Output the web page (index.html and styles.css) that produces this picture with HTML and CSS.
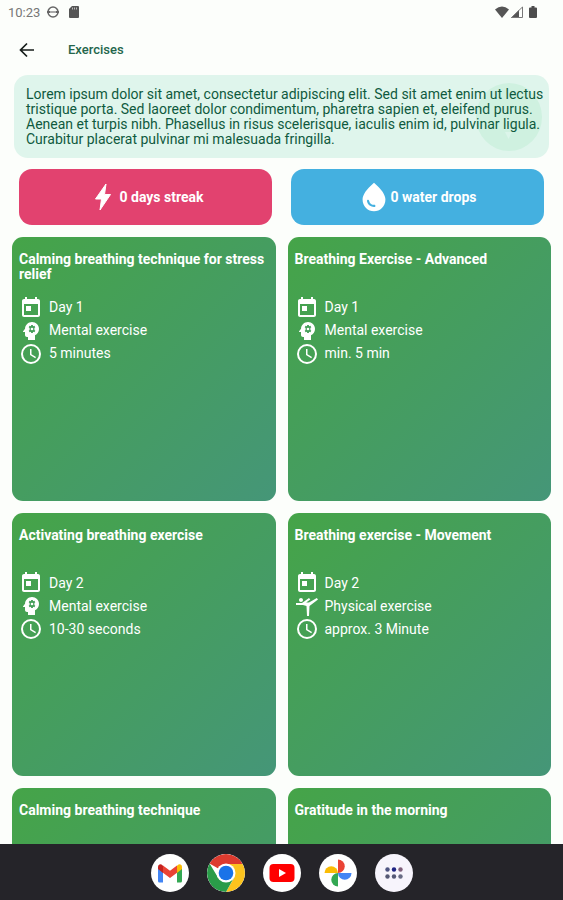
FILE: index.html
```
<!DOCTYPE html>
<html lang="en">
<head>
<meta charset="utf-8">
<meta name="viewport" content="width=device-width, initial-scale=1">
<title>Exercises</title>
<link rel="stylesheet" href="styles.css">
</head>
<body>
<svg class="sprite" aria-hidden="true">
  <symbol id="day" viewBox="0 0 24 24"><path d="M19 3h-1V1h-2v2H8V1H6v2H5c-1.100 0-2 .9-2 2v14c0 1.100.9 2 2 2h14c1.100 0 2-.9 2-2V5c0-1.100-.9-2-2-2zm0 16H5V8h14v11zM7 10h5v5H7z"/></symbol>
  <symbol id="mental" viewBox="0 0 24 24"><path d="M13 3C9.250 3 6.200 5.940 6.020 9.640L4.100 12.200c-.25.33-.01.8.4.8H6v3c0 1.100.9 2 2 2h1v3h7v-4.680c2.360-1.120 4-3.530 4-6.320 0-3.870-3.130-7-7-7z"/><path class="hole" d="M12.200 6h1.600l.3 1.200 1.300-.4.9 1.400-.9.900v1.800l.9.900-.9 1.400-1.300-.4-.3 1.200h-1.600l-.3-1.200-1.300.4-.9-1.400.9-.9V9.100l-.9-.9.9-1.400 1.300.4z"/><circle cx="13" cy="10" r="1.300"/></symbol>
  <symbol id="physical" viewBox="0 0 24 24"><path d="M4 6c0-1.100.9-2 2-2s2 .9 2 2-.9 2-2 2-2-.9-2-2zM1 9h6l7-5 1.310 1.520L11.140 8.500H14L21.800 4 23 5.400 14.500 12 14 22h-2l-.5-10L8 11H1V9z"/></symbol>
  <symbol id="time" viewBox="0 0 24 24"><path d="M12 2a10 10 0 1 0 0 20 10 10 0 0 0 0-20zm0 18a8 8 0 1 1 0-16 8 8 0 0 1 0 16zm.5-13H11v6l5.250 3.150.75-1.230-4.500-2.670z"/></symbol>
</svg>

<header class="status">
  <span class="clock">10:23</span>
  <svg width="14" height="14" viewBox="0 0 14 14"><circle cx="7" cy="7" r="5" fill="none" stroke="#666" stroke-width="1.500"/><path d="M1 6h12v2H1z" fill="#666"/><path d="M4 7h6" stroke="#eee"/></svg>
  <svg width="14" height="14" viewBox="0 0 14 14"><path d="M5 1h6a1 1 0 0 1 1 1v10a1 1 0 0 1-1 1H3a1 1 0 0 1-1-1V4z" fill="#555"/><path d="M5.500 2.500v2M7.500 2.500v2M9.500 2.500v2" stroke="#bbb"/></svg>
  <span class="spacer"></span>
  <svg width="14" height="14" viewBox="0 0 14 14"><path d="M0 4.500Q7-1.500 14 4.500L7 13z" fill="#555"/></svg>
  <svg width="14" height="14" viewBox="0 0 14 14"><path d="M1 13 9 5v8z" fill="#555"/><path d="M1.500 12.500h11V2z" fill="none" stroke="#777"/></svg>
  <svg class="battery" width="8" height="14" viewBox="0 0 8 14"><path d="M2.500 1h3v1.500H7a1 1 0 0 1 1 1V12a1 1 0 0 1-1 1H1a1 1 0 0 1-1-1V3.500a1 1 0 0 1 1-1h1.500z" fill="#4d4d4d"/></svg>
</header>

<nav class="appbar">
  <button class="back" aria-label="Back"><svg width="16" height="16" viewBox="0 0 16 16"><path d="M15 8H2M8 1.500 1.500 8 8 14.500" fill="none" stroke="#161d1a" stroke-width="1.700"/></svg></button>
  <h1>Exercises</h1>
</nav>

<main>
  <section class="intro">
    <svg class="blob" viewBox="0 0 66 70" aria-hidden="true"><ellipse cx="33" cy="35" rx="33" ry="34" fill="#cff1e0"/><path d="M29 50h7l-3.500 7z" fill="#dcf5ea"/></svg>
    <p>Lorem ipsum dolor sit amet, consectetur adipiscing elit. Sed sit amet enim ut lectus tristique porta. Sed laoreet dolor condimentum, pharetra sapien et, eleifend purus. Aenean et turpis nibh. Phasellus in risus scelerisque, iaculis enim id, pulvinar ligula. Curabitur placerat pulvinar mi malesuada fringilla.</p>
  </section>

  <section class="stats">
    <button class="stat streak"><svg viewBox="0 0 30 30"><path d="M18 2 7.500 17h6L12 28 22.500 12.500h-6z" fill="#fff" stroke="#fff" stroke-linejoin="round"/></svg>0 days streak</button>
    <button class="stat drops"><svg viewBox="1.500 1.500 21 21"><path fill="#fff" d="M12 2c-5.330 4.550-8 8.480-8 11.800 0 4.980 3.800 8.200 8 8.200s8-3.220 8-8.200c0-3.320-2.670-7.250-8-11.800zM7.830 14c.37 0 .67.26.74.62.41 2.220 2.280 2.980 3.640 2.870.43-.02.79.32.79.75 0 .4-.32.73-.72.75-2.130.13-4.620-1.090-5.190-4.120-.08-.45.28-.87.74-.87z"/></svg>0 water drops</button>
  </section>

  <section class="cards">
    <article class="card"><h2>Calming breathing technique for stress relief</h2>
      <ul><li><svg><use href="#day"/></svg>Day 1</li><li><svg><use href="#mental"/></svg>Mental exercise</li><li><svg><use href="#time"/></svg>5 minutes</li></ul></article>
    <article class="card"><h2>Breathing Exercise - Advanced</h2>
      <ul><li><svg><use href="#day"/></svg>Day 1</li><li><svg><use href="#mental"/></svg>Mental exercise</li><li><svg><use href="#time"/></svg>min. 5 min</li></ul></article>
    <article class="card"><h2>Activating breathing exercise</h2>
      <ul><li><svg><use href="#day"/></svg>Day 2</li><li><svg><use href="#mental"/></svg>Mental exercise</li><li><svg><use href="#time"/></svg>10-30 seconds</li></ul></article>
    <article class="card"><h2>Breathing exercise - Movement</h2>
      <ul><li><svg><use href="#day"/></svg>Day 2</li><li><svg><use href="#physical"/></svg>Physical exercise</li><li><svg><use href="#time"/></svg>approx. 3 Minute</li></ul></article>
    <article class="card"><h2>Calming breathing technique</h2></article>
    <article class="card"><h2>Gratitude in the morning</h2></article>
  </section>
</main>

<footer class="dock">
  <button aria-label="Gmail"><svg viewBox="0 0 38 38"><path d="M7 13v14a1.500 1.500 0 0 0 1.500 1.500H12V16z" fill="#4285f4"/><path d="M31 13v14a1.500 1.500 0 0 1-1.500 1.500H26V16z" fill="#34a853"/><path d="M26 12v7l5-4v-2c0-2.500-2.500-3.500-4.300-2z" fill="#fbbc04"/><path d="M12 12v7l-5-4v-2c0-2.500 2.500-3.500 4.300-2z" fill="#c5221f"/><path d="M12 11.500v7.300l7 5.200 7-5.200v-7.300l-7 5.200z" fill="#ea4335"/></svg></button>
  <button aria-label="Chrome"><svg viewBox="0 0 38 38"><path d="M19 19 2.550 9.500A19 19 0 0 1 35.450 9.500z" fill="#dd3b2f"/><path d="M19 10H35.700A19 19 0 0 1 19 38l8-14z" fill="#fcc31e"/><path d="M2.550 9.500A19 19 0 0 0 19 38l8-14.500-16 0z" fill="#2a9c49"/><circle cx="19" cy="19" r="9.500" fill="#fff"/><circle cx="19" cy="19" r="7.300" fill="#1a73e8"/></svg></button>
  <button aria-label="YouTube"><svg viewBox="0 0 38 38"><rect x="6.500" y="10" width="25" height="18" rx="4" fill="#f00"/><path d="m16 15 7 4-7 4z" fill="#fff"/></svg></button>
  <button aria-label="Photos"><svg viewBox="0 0 38 38"><path d="M19 5.500a6.700 6.700 0 0 1 0 13.500z" fill="#ea4335"/><path d="M32.500 19a6.700 6.700 0 0 1-13.500 0z" fill="#4285f4"/><path d="M19 32.500a6.700 6.700 0 0 1 0-13.500z" fill="#34a853"/><path d="M5.500 19a6.700 6.700 0 0 1 13.500 0z" fill="#fbbc04"/></svg></button>
  <button class="apps" aria-label="All apps"><svg viewBox="0 0 38 38"><g fill="#4e5482"><circle cx="12.500" cy="15.500" r="2.200"/><circle cx="19" cy="15.500" r="2.200" fill="#1f2483"/><circle cx="25.500" cy="15.500" r="2.200" fill="#80607c"/><circle cx="12.500" cy="22.500" r="2.200" fill="#555875"/><circle cx="19" cy="22.500" r="2.200" fill="#555875"/><circle cx="25.500" cy="22.500" r="2.200" fill="#686b84"/></g></svg></button>
</footer>
</body>
</html>
```
FILE: styles.css
```
* { box-sizing: border-box; margin: 0; }

body {
  display: flex;
  flex-direction: column;
  height: 100vh;
  overflow: hidden;
  background: #fcfefb;
  color: #fff;
  font: 400 14px/15px Roboto, sans-serif;
}

button {
  border: 0;
  padding: 0;
  font: inherit;
  color: inherit;
}

svg { display: block; flex: none; }
.sprite { position: absolute; width: 0; height: 0; }

.status {
  display: flex;
  align-items: center;
  gap: 1px;
  height: 24px;
  padding: 0 26px 0 8px;
  color: #777;
  font-size: 13px;
}
.clock { margin-right: 5px; }
.clock + svg { margin-right: 6px; }
.spacer { flex: 1; }
.battery { margin-left: 4px; }

.appbar {
  display: flex;
  align-items: center;
  height: 51px;
  padding: 0 19px;
  gap: 33px;
}
.back { background: none; }
h1 {
  color: #24664b;
  font-size: 13px;
  font-weight: 500;
}

main { flex: 1; min-height: 0; overflow: hidden; }

.intro {
  position: relative;
  margin: 0 14px;
  padding: 12px 4px 11px 12px;
  border-radius: 14px;
  background: #dff5ec;
  color: #0f5a3e;
}
.intro p { position: relative; }
.blob { position: absolute; top: 7px; right: 7px; width: 66px; height: 70px; }

.stats {
  display: grid;
  grid-template-columns: 1fr 1fr;
  gap: 19px;
  padding: 11px 19px 12px;
}
.stat {
  display: flex;
  align-items: center;
  justify-content: center;
  gap: 2px;
  height: 56px;
  border-radius: 13px;
  font-weight: 700;
}
.stat svg { width: 30px; height: 30px; }
.streak { background: #e2426f; }
.drops { background: #44b0e0; }

.cards {
  display: grid;
  grid-template-columns: 1fr 1fr;
  gap: 12px;
  padding: 0 12px;
}
.card {
  aspect-ratio: 1;
  padding: 15px 7px;
  border-radius: 11px;
  background: linear-gradient(135deg, #45a448, #459678);
}
h2 {
  min-height: 30px;
  margin-bottom: 14px;
  font-size: 14px;
  font-weight: 700;
}
ul { padding: 0; list-style: none; }
li { display: flex; align-items: center; gap: 6px; height: 23px; }
li svg {
  width: 24px;
  height: 24px;
  fill: #fff;
}
.hole { fill: #459f5a; }

.dock {
  display: flex;
  justify-content: center;
  align-items: center;
  gap: 18px;
  height: 56px;
  padding-top: 2px;
  background: #252429;
}
.dock button {
  width: 38px;
  height: 38px;
  border-radius: 50%;
  overflow: hidden;
  background: #fff;
}
.dock .apps { background: #f7f4fc; }
```
